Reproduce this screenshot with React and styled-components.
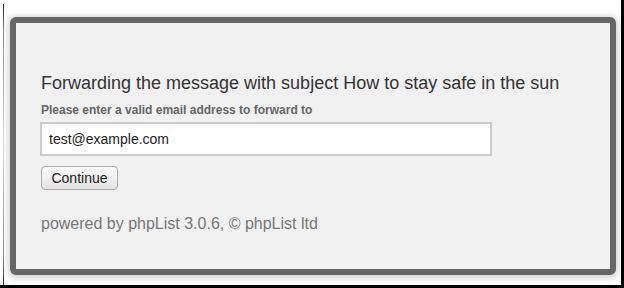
import React from 'react'
import styled, { createGlobalStyle } from 'styled-components'

const GlobalStyle = createGlobalStyle`
  body {
    margin: 0;
    font-family: "Liberation Sans", Arial, sans-serif;
  }
`

const Screen = styled.div`
  width: 624px;
  height: 288px;
  box-sizing: border-box;
  background: #fff;
  border-right: 3px solid #000;
  border-bottom: 3px solid #000;
  padding: 17px 0 0 10px;
  position: relative;
`

const EdgeLine = styled.div`
  position: absolute;
  left: 3px;
  top: 4px;
  bottom: 0;
  width: 1px;
  background: linear-gradient(#222, #888 10%, #ddd 50%, #888 90%, #222);
`

const Panel = styled.div`
  width: 606px;
  height: 258px;
  box-sizing: border-box;
  border: 6px solid #666;
  border-radius: 6px;
  background: #f1f1f1;
  box-shadow: 0 1px 6px 2px rgba(0, 0, 0, 0.18);
  padding: 49px 25px 0;
  display: flex;
  flex-direction: column;
  align-items: flex-start;
`

const Title = styled.h3`
  margin: 0;
  font-size: 18px;
  line-height: 22px;
  font-weight: normal;
  color: #333;
`

const Label = styled.label`
  margin-top: 9px;
  font-size: 12px;
  line-height: 14px;
  font-weight: bold;
  color: #666;
`

const EmailInput = styled.input`
  margin-top: 5px;
  margin-left: -1px;
  width: 452px;
  height: 34px;
  box-sizing: border-box;
  border: 2px solid #ccc;
  background: #fff;
  padding: 0 7px;
  font-family: "Liberation Sans", Arial, sans-serif;
  font-size: 14px;
  color: #222;
  outline: none;
`

const Button = styled.button`
  margin-top: 10px;
  width: 77px;
  height: 24px;
  box-sizing: border-box;
  border: 1px solid #aaa;
  border-radius: 4px;
  background: linear-gradient(#fdfdfd, #e2e2e2);
  font-family: "Liberation Sans", Arial, sans-serif;
  font-size: 14px;
  color: #222;
  padding: 0;
`

const Footer = styled.p`
  margin: 25px 0 0;
  font-size: 16px;
  line-height: 18px;
  color: #777;
`

export default function App() {
  return (
    <>
      <GlobalStyle />
      <Screen>
        <EdgeLine />
        <Panel>
          <Title>Forwarding the message with subject How to stay safe in the sun</Title>
          <Label htmlFor="email">Please enter a valid email address to forward to</Label>
          <EmailInput id="email" defaultValue="test@example.com" />
          <Button>Continue</Button>
          <Footer>powered by phpList 3.0.6, © phpList ltd</Footer>
        </Panel>
      </Screen>
    </>
  )
}
